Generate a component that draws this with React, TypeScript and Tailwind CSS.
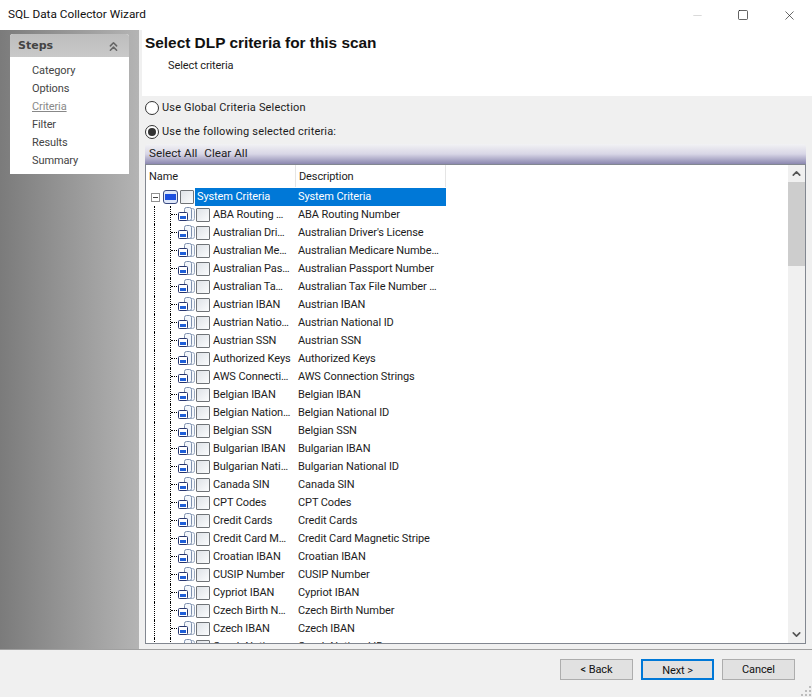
import { ChevronsUp, ChevronUp, ChevronDown, Minus, Square, X } from "lucide-react";

const steps = ["Category", "Options", "Criteria", "Filter", "Results", "Summary"];

const rows = [
  ["ABA Routing …", "ABA Routing Number"],
  ["Australian Dri…", "Australian Driver's License"],
  ["Australian Me…", "Australian Medicare Numbe…"],
  ["Australian Pas…", "Australian Passport Number"],
  ["Australian Ta…", "Australian Tax File Number …"],
  ["Austrian IBAN", "Austrian IBAN"],
  ["Austrian Natio…", "Austrian National ID"],
  ["Austrian SSN", "Austrian SSN"],
  ["Authorized Keys", "Authorized Keys"],
  ["AWS Connecti…", "AWS Connection Strings"],
  ["Belgian IBAN", "Belgian IBAN"],
  ["Belgian Nation…", "Belgian National ID"],
  ["Belgian SSN", "Belgian SSN"],
  ["Bulgarian IBAN", "Bulgarian IBAN"],
  ["Bulgarian Nati…", "Bulgarian National ID"],
  ["Canada SIN", "Canada SIN"],
  ["CPT Codes", "CPT Codes"],
  ["Credit Cards", "Credit Cards"],
  ["Credit Card M…", "Credit Card Magnetic Stripe"],
  ["Croatian IBAN", "Croatian IBAN"],
  ["CUSIP Number", "CUSIP Number"],
  ["Cypriot IBAN", "Cypriot IBAN"],
  ["Czech Birth N…", "Czech Birth Number"],
  ["Czech IBAN", "Czech IBAN"],
  ["Czech Nationa…", "Czech National ID"],
];

function Checkbox() {
  return (
    <span className="block h-[14px] w-[14px] shrink-0 rounded-[1px] border border-[#6f7377] bg-gradient-to-br from-[#dfe3e8] to-[#fbfcfd]" />
  );
}

function RowIcon() {
  return (
    <svg width="17" height="16" viewBox="0 0 17 16" className="shrink-0">
      <rect x="10.5" y="1.5" width="6" height="12" rx="2" fill="#f4f7fb" stroke="#9aa9c0" />
      <rect x="6.5" y="0.5" width="7" height="13" rx="2" fill="#f4f7fb" stroke="#7c8fae" />
      <rect x="0.5" y="5.5" width="9" height="8" rx="1" fill="#fff" stroke="#26356e" />
      <rect x="2" y="9" width="6" height="3" fill="#1f5fd8" />
    </svg>
  );
}

function Radio({ checked }: { checked?: boolean }) {
  return (
    <span className="flex h-[14px] w-[14px] shrink-0 items-center justify-center rounded-full border border-[#333] bg-white">
      {checked && <span className="h-2 w-2 rounded-full bg-[#333]" />}
    </span>
  );
}

function Button({ label, primary }: { label: string; primary?: boolean }) {
  return (
    <button
      type="button"
      className={`h-[21px] w-[73px] bg-[#e1e1e1] pt-[2px] text-[11px] text-[#111] ${
        primary ? "border-2 border-[#0078d7]" : "border border-[#adadad]"
      }`}
    >
      {label}
    </button>
  );
}

export default function App() {
  return (
    <div
      className="flex h-[697px] w-[812px] flex-col overflow-hidden bg-[#f0f0f0] text-[11px] tracking-[-0.1px] text-[#1c1c1c]"
      style={{ fontFamily: 'Roboto, "Noto Sans", sans-serif' }}
    >
      <div className="flex h-[30px] shrink-0 items-center justify-between bg-white pl-2">
        <span className="text-[11.8px] tracking-normal text-[#111]">SQL Data Collector Wizard</span>
        <div className="flex items-center text-[#111]">
          <span className="flex h-[30px] w-[46px] items-center justify-center text-[#bbb]">
            <Minus size={13} strokeWidth={1} />
          </span>
          <span className="flex h-[30px] w-[46px] items-center justify-center">
            <Square size={12} strokeWidth={1.3} />
          </span>
          <span className="flex h-[30px] w-[46px] items-center justify-center">
            <X size={15} strokeWidth={1} />
          </span>
        </div>
      </div>

      <div className="flex min-h-0 flex-1">
        <div className="w-[139px] shrink-0 bg-gradient-to-r from-[#7b7b7b] to-[#b4b4b4] pl-[10px] pt-1">
          <div className="w-[119px] overflow-hidden rounded-t-[3px] bg-white pb-[4px]">
            <div className="flex h-[23px] items-center justify-between bg-gradient-to-b from-[#bdbdbd] to-[#c9c9c9] px-2 pt-[1px]">
              <span
                className="text-[11px] font-bold tracking-normal text-[#444]"
                style={{ fontFamily: '"DejaVu Sans", sans-serif' }}
              >
                Steps
              </span>
              <ChevronsUp size={15} className="text-[#666]" strokeWidth={2.5} />
            </div>
            <ul className="pt-[5px]">
              {steps.map((s) => (
                <li
                  key={s}
                  className={`flex h-[18px] items-center pl-[22px] ${
                    s === "Criteria" ? "text-[#888] underline" : "text-[#444]"
                  }`}
                >
                  {s}
                </li>
              ))}
            </ul>
          </div>
        </div>

        <div className="flex min-w-0 flex-1 flex-col">
          <div className="ml-[3px] h-[66px] shrink-0 bg-white pl-[3px] pt-[4px]">
            <h1
              className="text-[15.4px] font-bold leading-[17px] tracking-normal text-[#111]"
              style={{ fontFamily: '"Liberation Sans", sans-serif' }}
            >
              Select DLP criteria for this scan
            </h1>
            <p className="pl-[23px] pt-[7px]">Select criteria</p>
          </div>

          <div className="flex min-h-0 flex-1 flex-col pl-[6px] pr-[6px]">
            <label className="mt-[3px] flex h-[18px] items-center gap-[3px] tracking-[0.17px]">
              <Radio /> Use Global Criteria Selection
            </label>
            <label className="mt-[6px] flex h-[18px] items-center gap-[3px] tracking-[0.17px]">
              <Radio checked /> Use the following selected criteria:
            </label>
            <div className="mt-[3px] flex h-[20px] shrink-0 items-center gap-[7px] rounded-t-[3px] bg-gradient-to-b from-[#f2f2f4] via-[#d8d6e6] to-[#8c88b0] pl-1 text-[11.7px] tracking-normal text-[#222]">
              <span>Select All</span>
              <span>Clear All</span>
            </div>

            <div className="mb-[5px] flex min-h-0 flex-1 overflow-hidden border border-[#828790] bg-white">
              <div className="min-w-0 flex-1 overflow-hidden">
                <div className="flex h-[23px] w-[300px] items-start">
                  <span className="h-[22px] w-[150px] border-r border-[#e5e5e5] pl-[3px] leading-[24px]">Name</span>
                  <span className="h-[22px] w-[150px] border-r border-[#e5e5e5] pl-[3px] leading-[24px]">Description</span>
                </div>
                <div className="flex h-[18px] w-[300px] items-center">
                  <span className="ml-[5px] flex h-[9px] w-[9px] shrink-0 items-center justify-center border border-[#919191] bg-white">
                    <span className="h-px w-[5px] bg-[#444]" />
                  </span>
                  <span className="ml-[3px] flex h-[14px] w-[15px] shrink-0 items-center rounded-[3px] border border-[#3a4a80] bg-[#dfe8fa] px-px">
                    <span className="h-[6px] w-full bg-[#1d50e0]" />
                  </span>
                  <span className="ml-[2px]">
                    <Checkbox />
                  </span>
                  <span className="ml-px flex h-[18px] w-[251px] items-center bg-[#0078d7] pl-[2px] text-white">
                    <span className="w-[101px] shrink-0">System Criteria</span>
                    <span>System Criteria</span>
                  </span>
                </div>
                {rows.map(([name, desc]) => (
                  <div key={name} className="flex h-[18px] w-[300px] items-center">
                    <span className="ml-[8px] h-[18px] w-[16px] shrink-0 border-l border-dotted border-black" />
                    <span className="h-[18px] w-[8px] shrink-0 border-l border-dotted border-black">
                      <span className="mt-[8px] block w-[8px] border-t border-dotted border-black" />
                    </span>
                    <RowIcon />
                    <span className="ml-px">
                      <Checkbox />
                    </span>
                    <span className="ml-[3px] w-[85px] shrink-0 whitespace-nowrap">{name}</span>
                    <span className="whitespace-nowrap">{desc}</span>
                  </div>
                ))}
              </div>

              <div className="flex w-[17px] shrink-0 flex-col items-center bg-[#f0f0f0] text-[#555]">
                <span className="flex h-[17px] items-center justify-center">
                  <ChevronUp size={13} strokeWidth={3} />
                </span>
                <span className="h-[84px] w-full bg-[#cdcdcd]" />
                <span className="flex-1" />
                <span className="flex h-[17px] items-center justify-center">
                  <ChevronDown size={13} strokeWidth={3} />
                </span>
              </div>
            </div>
          </div>
        </div>
      </div>

      <div className="relative flex h-[48px] shrink-0 items-start justify-end gap-[8px] border-t border-[#a0a0a0] pr-[17px] pt-[9px]">
        <Button label="< Back" />
        <Button label="Next >" primary />
        <Button label="Cancel" />
        <svg width="12" height="12" viewBox="0 0 12 12" className="absolute bottom-0 right-0" fill="#bdbdbd">
          <rect x="9" y="1" width="2" height="2" />
          <rect x="5" y="5" width="2" height="2" />
          <rect x="9" y="5" width="2" height="2" />
          <rect x="1" y="9" width="2" height="2" />
          <rect x="5" y="9" width="2" height="2" />
          <rect x="9" y="9" width="2" height="2" />
        </svg>
      </div>
    </div>
  );
}
